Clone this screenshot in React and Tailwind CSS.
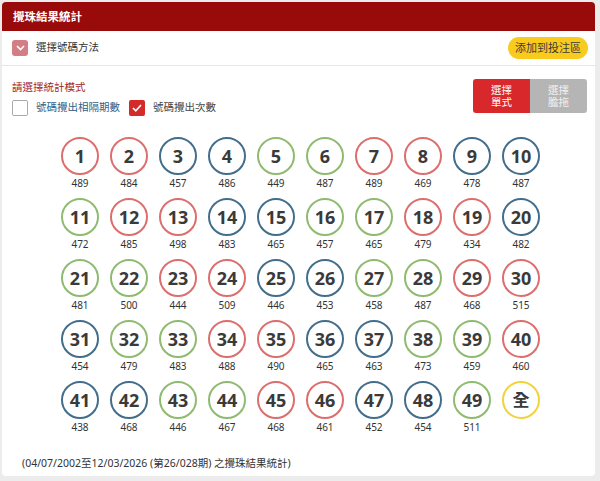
import React from "react";

const RED = [1,2,7,8,12,13,18,19,23,24,29,30,34,35,40,45,46];
const BLUE = [3,4,9,10,14,15,20,25,26,31,36,37,41,42,47,48];
const COUNTS = [489,484,457,486,449,487,489,469,478,487,472,485,498,483,465,457,465,479,434,482,481,500,444,509,446,453,458,487,468,515,454,479,483,488,490,465,463,473,459,460,438,468,446,467,468,461,452,454,511];

function borderFor(n) {
  if (RED.includes(n)) return "border-[#dc6e6e]";
  if (BLUE.includes(n)) return "border-[#426e8c]";
  return "border-[#8fbb70]";
}

function Ball({ n }) {
  return (
    <div className="flex flex-col items-center w-[38px]">
      <div className={`w-[38px] h-[38px] rounded-full border-2 ${borderFor(n)} bg-white flex items-center justify-center text-[18px] font-bold text-[#3a3a3a] leading-none`}>
        {n}
      </div>
      <div className="mt-[2px] text-[10px] leading-[12px] text-[#333]">{COUNTS[n - 1]}</div>
    </div>
  );
}

export default function App() {
  const nums = Array.from({ length: 49 }, (_, i) => i + 1);
  return (
    <div className="w-[600px] h-[481px] bg-[#ececec] pt-[2px] pl-[2px]" style={{ fontFamily: '"Noto Sans", "Noto Sans CJK TC", sans-serif' }}>
      <div className="w-[593px] h-[474px] bg-white rounded-[4px] overflow-hidden flex flex-col">
        <div className="h-[29px] bg-[#990b0b] flex items-center px-[11px]">
          <span className="text-white text-[11.5px] font-bold">攪珠結果統計</span>
        </div>
        <div className="h-[35px] border-b border-[#e6e6e6] flex items-center justify-between pl-[10px] pr-[7px]">
          <div className="flex items-center gap-[8px]">
            <div className="w-[16px] h-[16px] rounded-[3px] bg-[#d47d85] flex items-center justify-center">
              <svg width="9" height="6" viewBox="0 0 9 6"><path d="M1 1l3.5 3.5L8 1" stroke="#fff" strokeWidth="1.6" fill="none" /></svg>
            </div>
            <span className="text-[10.5px] text-[#333]">選擇號碼方法</span>
          </div>
          <div className="h-[22px] px-[7px] rounded-full bg-[#f9cb1c] flex items-center text-[11px] text-[#3a3a3a]">添加到投注區</div>
        </div>
        <div className="flex justify-between pl-[10px] pr-[8px] pt-[13px]">
          <div className="flex flex-col">
            <span className="text-[10.5px] text-[#a3262a] leading-[16px]">請選擇統計模式</span>
            <div className="flex items-center mt-[5px]">
              <div className="w-[16px] h-[16px] border border-[#aaa] rounded-[2px] bg-white"></div>
              <span className="ml-[8px] text-[10.5px] text-[#2f5f8a]">號碼攪出相隔期數</span>
              <div className="ml-[9px] w-[16px] h-[16px] rounded-[2px] bg-[#d42a2a] flex items-center justify-center">
                <svg width="10" height="8" viewBox="0 0 10 8"><path d="M1 4l2.8 2.8L9 1" stroke="#fff" strokeWidth="1.6" fill="none" /></svg>
              </div>
              <span className="ml-[8px] text-[10.5px] text-[#444]">號碼攪出次數</span>
            </div>
          </div>
          <div className="flex w-[114px] h-[34px] rounded-[3px] overflow-hidden">
            <div className="w-[57px] bg-[#d8282c] text-white text-[10.5px] leading-[12.5px] flex flex-col items-center justify-center text-center"><span>選擇</span><span>單式</span></div>
            <div className="w-[57px] bg-[#b5b5b5] text-[#f2f2f2] text-[10.5px] leading-[12.5px] flex flex-col items-center justify-center text-center"><span>選擇</span><span>膽拖</span></div>
          </div>
        </div>
        <div className="mt-[21px] ml-[59px] grid grid-cols-[repeat(10,38px)] gap-x-[11px] gap-y-[9px]">
          {nums.map((n) => <Ball key={n} n={n} />)}
          <div className="flex flex-col items-center w-[38px]">
            <div className="w-[38px] h-[38px] rounded-full border-2 border-[#f3d23a] flex items-center justify-center text-[17px] font-bold text-[#3a3a3a]">全</div>
          </div>
        </div>
        <div className="mt-auto mb-[6px] ml-[20px] text-[10.5px] text-[#333] leading-[14px]">(04/07/2002至12/03/2026 (第26/028期) 之攪珠結果統計)</div>
      </div>
    </div>
  );
}
